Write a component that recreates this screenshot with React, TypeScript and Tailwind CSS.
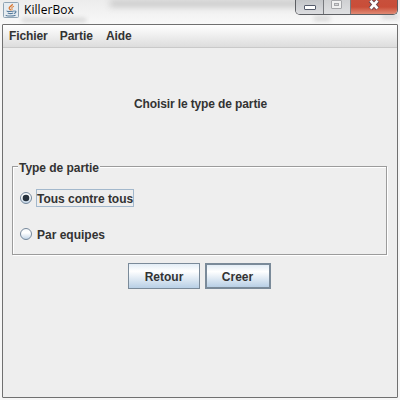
import type { ReactNode } from "react";

function JavaIcon() {
  return (
    <svg className="mt-[2px] h-4 w-4 shrink-0" viewBox="0 0 16 16" fill="none">
      <rect x="0.5" y="0.5" width="15" height="15" rx="1" fill="#e6ecf1" stroke="#8fa3b3" />
      <path d="M9.3 2C10 3.7 6 4.5 6.2 6.2C6.4 7.2 7.5 7.4 7.6 8.4" stroke="#d9752f" strokeWidth="1.4" />
      <path d="M11 4.2C9 5 8.4 5.8 9 6.7C9.4 7.5 9 8 8.6 8.5" stroke="#e08a48" strokeWidth="1.1" />
      <path d="M4 8.8C3.4 9.8 10 9.8 11 8.9M4.8 10.9C6 11.5 9 11.5 10.2 10.9M3 12.9C3 14.3 11.5 14.4 12.5 13M11.3 9C13.8 8.6 13.3 11 11 11.5" stroke="#54799a" strokeWidth="1.1" />
    </svg>
  );
}

function WindowControls() {
  return (
    <div className="mr-[2px] flex h-[15px] w-[103px] overflow-hidden rounded-b-[5px] border border-t-0 border-[#5d5f63]">
      <div className="flex w-[28px] justify-center border-r border-[#77797d] bg-linear-to-b from-[#c3c5c8] to-[#dcdde0]">
        <svg className="h-[14px] w-[14px]" viewBox="0 0 14 14">
          <rect x="1.5" y="5.5" width="11" height="4" rx="0.5" fill="#fff" stroke="#555b6b" />
        </svg>
      </div>
      <div className="flex w-[27px] justify-center border-r border-[#77797d] bg-linear-to-b from-[#cfd0d2] to-[#dfe0e2]">
        <svg className="h-[14px] w-[14px]" viewBox="0 0 14 14">
          <rect x="1.5" y="0.5" width="10" height="8" rx="0.5" fill="#f0f0f0" stroke="#a5a6a9" />
          <rect x="4.5" y="3.5" width="4" height="2" fill="#d4d5d7" stroke="#a5a6a9" />
        </svg>
      </div>
      <div className="flex flex-1 justify-center bg-linear-to-b from-[#c8503c] via-[#c94d38] to-[#e08a74]">
        <svg className="h-[14px] w-[14px]" viewBox="0 0 14 14">
          <path d="M3.3 0.5L10.7 8.7M10.7 0.5L3.3 8.7" stroke="#6b4650" strokeWidth="4.6" />
          <path d="M3.5 0.7L10.5 8.5M10.5 0.7L3.5 8.5" stroke="#fff" strokeWidth="2.7" />
        </svg>
      </div>
    </div>
  );
}

function TitleBar() {
  return (
    <header className="relative flex h-6 justify-between overflow-hidden bg-linear-to-b from-[#ececec] to-[#f8f8f8] pl-[3px]">
      <div className="absolute top-0 left-[110px] h-[7px] w-[220px] bg-[#cacaca] blur-[3px]" />
      <div className="absolute top-[18px] left-[22px] h-[4px] w-[64px] bg-[#d4d4d4] blur-[2px]" />
      <div className="absolute top-[16px] left-[314px] h-[5px] w-[16px] bg-[#d8d8d8] blur-[2px]" />
      <div className="absolute top-[14px] left-[382px] h-[5px] w-[16px] bg-[#d8d8d8] blur-[2px]" />
      <div className="relative flex gap-[5px]">
        <JavaIcon />
        <span className="font-['Open_Sans','Noto_Sans',sans-serif] text-[12px] leading-[20px] tracking-[0.05px] text-black">KillerBox</span>
      </div>
      <div className="relative">
        <WindowControls />
      </div>
    </header>
  );
}

function Radio({ checked = false, children }: { checked?: boolean; children: ReactNode }) {
  return (
    <label className="flex h-[18px] items-center gap-[4px]">
      <svg className="h-3 w-3" viewBox="0 0 12 12">
        <defs>
          <linearGradient id="radio-fill" x1="0" y1="0" x2="0" y2="1">
            <stop offset="0" stopColor="#f4f8fb" />
            <stop offset="0.4" stopColor="#ffffff" />
            <stop offset="1" stopColor="#bfd3e6" />
          </linearGradient>
        </defs>
        <circle cx="6" cy="6" r="5.5" fill="url(#radio-fill)" stroke="#75879a" />
        {checked && <circle cx="6" cy="6" r="3.3" fill="#26313c" />}
      </svg>
      <span className={`flex h-[18px] items-center border pt-[2px] ${checked ? "border-[#a3b8cc] tracking-[-0.02px]" : "border-transparent"}`}>
        {children}
      </span>
    </label>
  );
}

export default function App() {
  return (
    <div className="flex h-[400px] w-[400px] flex-col overflow-hidden bg-[#f6f6f6] font-['Liberation_Sans',Arial,sans-serif] text-[12px] font-bold whitespace-nowrap text-[#333333]">
      <div className="font-normal">
        <TitleBar />
      </div>
      <main className="mx-[2px] flex h-[374px] flex-col rounded-[1px] border border-[#707070] bg-[#eeeeee]">
        <nav className="flex h-[23px] shrink-0 items-center gap-[13px] border-b border-[#c9c9c9] bg-linear-to-b from-white to-[#dddddd] pl-[6px] tracking-[-0.1px]">
          <span>Fichier</span>
          <span className="-ml-px tracking-normal">Partie</span>
          <span>Aide</span>
        </nav>
        <h1 className="mt-[47px] h-[18px] pl-[131px] leading-[18px] tracking-[-0.12px]">Choisir le type de partie</h1>
        <section className="mt-[53px] mr-[10px] ml-[9px] h-[89px] border border-[#9b9b9b] pl-[7px] shadow-[1px_1px_0_#fff,inset_1px_1px_0_#fff]">
          <h2 className="-mt-[8px] -ml-[2px] h-[18px] w-[82px] bg-[#eeeeee] pl-[1px] leading-[18px] tracking-[-0.04px]">Type de partie</h2>
          <div className="mt-[12px] flex flex-col gap-[18px]">
            <Radio checked>Tous contre tous</Radio>
            <Radio>Par equipes</Radio>
          </div>
        </section>
        <div className="mt-[8px] flex gap-[5px] pl-[125px]">
          <button className="h-[26px] w-[72px] border border-[#7a8a99] bg-linear-to-b from-[#e3edf6] via-white via-30% to-[#b8cfe5] pt-[2px]">Retour</button>
          <button className="h-[26px] w-[66px] border-2 border-[#7a8a99] bg-linear-to-b from-[#e3edf6] via-white via-30% to-[#b8cfe5] pt-[2px] pr-px">Creer</button>
        </div>
      </main>
    </div>
  );
}
